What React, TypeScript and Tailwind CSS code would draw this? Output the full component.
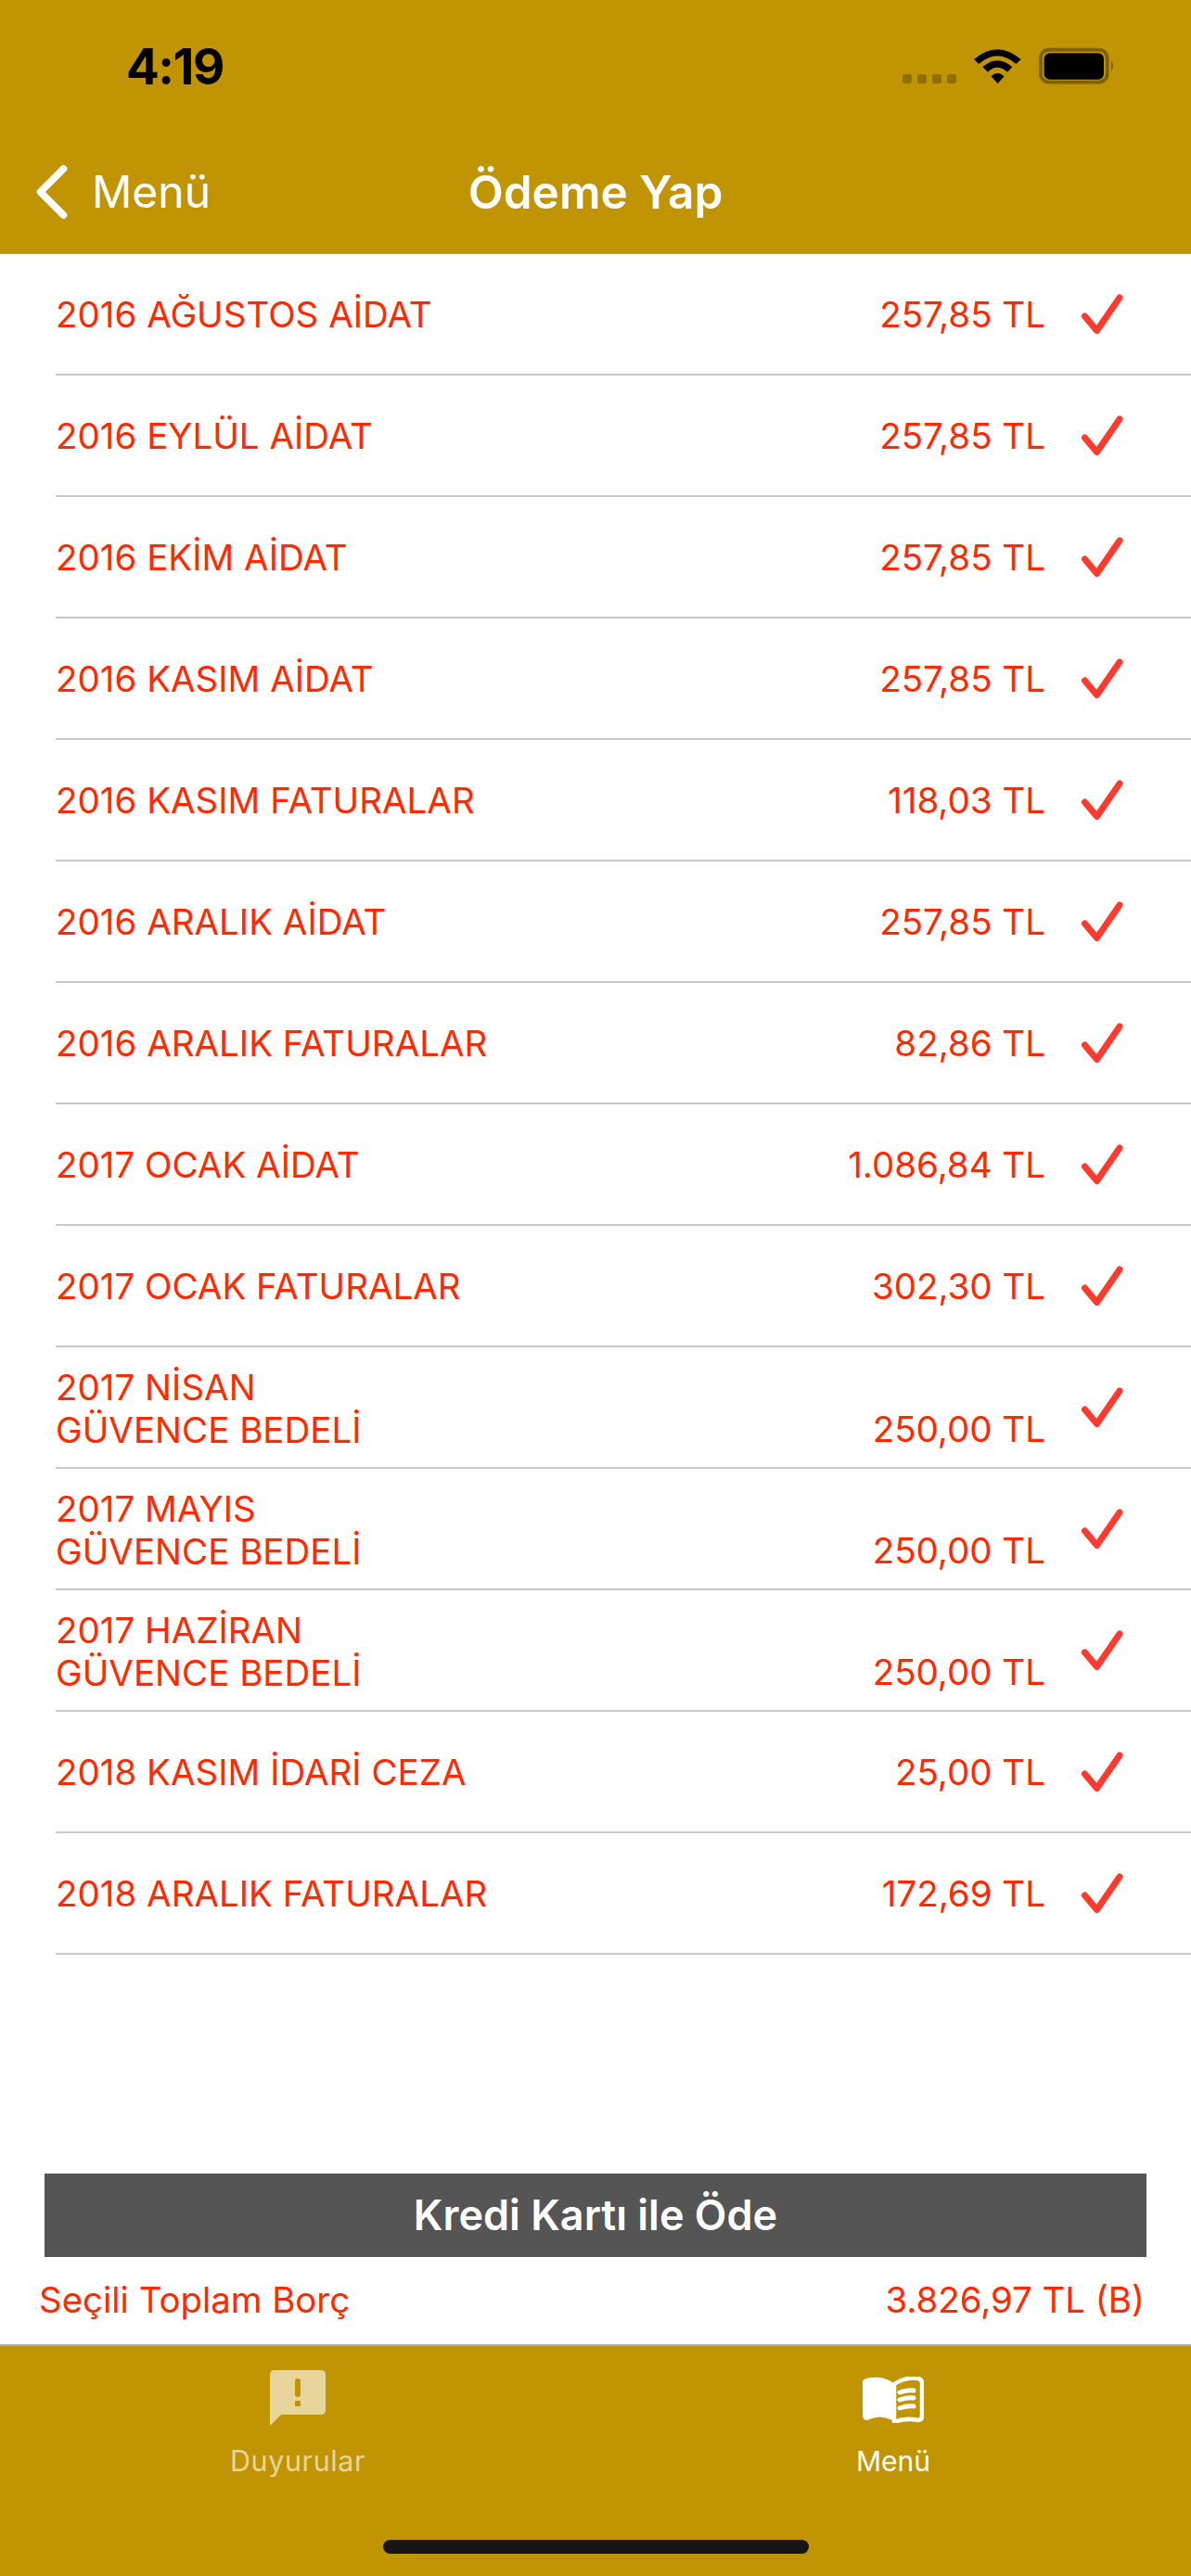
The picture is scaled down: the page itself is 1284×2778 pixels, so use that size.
import React from "react";

const rows: { label: string; price: string; two?: boolean }[] = [
  { label: "2016 AĞUSTOS AİDAT", price: "257,85 TL" },
  { label: "2016 EYLÜL AİDAT", price: "257,85 TL" },
  { label: "2016 EKİM AİDAT", price: "257,85 TL" },
  { label: "2016 KASIM AİDAT", price: "257,85 TL" },
  { label: "2016 KASIM FATURALAR", price: "118,03 TL" },
  { label: "2016 ARALIK AİDAT", price: "257,85 TL" },
  { label: "2016 ARALIK FATURALAR", price: "82,86 TL" },
  { label: "2017 OCAK AİDAT", price: "1.086,84 TL" },
  { label: "2017 OCAK FATURALAR", price: "302,30 TL" },
  { label: "2017 NİSAN\nGÜVENCE BEDELİ", price: "250,00 TL", two: true },
  { label: "2017 MAYIS\nGÜVENCE BEDELİ", price: "250,00 TL", two: true },
  { label: "2017 HAZİRAN\nGÜVENCE BEDELİ", price: "250,00 TL", two: true },
  { label: "2018 KASIM İDARİ CEZA", price: "25,00 TL" },
  { label: "2018 ARALIK FATURALAR", price: "172,69 TL" },
];

function Check() {
  return (
    <svg width="50" height="50" viewBox="0 0 50 50" className="shrink-0">
      <path d="M6.5 27 L19.5 42.5 L44 7" fill="none" stroke="#ff3b30" strokeWidth="7" strokeLinecap="round" strokeLinejoin="round" />
    </svg>
  );
}

function StatusIcons() {
  return (
    <svg width="270" height="70" viewBox="0 0 810 210" className="shrink-0">
      <g fill="#8f6f00">
        <rect x="69" y="123" width="30" height="31" rx="9" />
        <rect x="117" y="123" width="30" height="31" rx="9" />
        <rect x="165" y="123" width="30" height="31" rx="9" />
        <rect x="213" y="123" width="30" height="31" rx="9" />
      </g>
      <g fill="#000">
        <path d="M300 75 Q375 10 452 75 L436 90 Q375 38 316 90 Z" />
        <path d="M328 100 Q375 58 424 100 L408 116 Q375 86 345 116 Z" />
        <path d="M355 130 Q376 108 398 130 L377 153 Z" />
      </g>
      <rect x="516" y="44" width="215" height="105" rx="27" fill="none" stroke="#7d6100" strokeWidth="11" />
      <rect x="527" y="55" width="193" height="85" rx="18" fill="#000" />
      <path d="M744 79 Q756 96 744 114 Z" fill="#7d6100" />
    </svg>
  );
}

function Chevron() {
  return (
    <svg width="34" height="58" viewBox="0 0 34 58" className="shrink-0">
      <path d="M29.5 4 L4.5 29 L29.5 54" fill="none" stroke="#fff" strokeWidth="7.5" strokeLinecap="round" strokeLinejoin="round" />
    </svg>
  );
}

function Bubble() {
  return (
    <svg width="60" height="60" viewBox="0 0 60 60">
      <path d="M5 0 H55 Q60 0 60 5 V43 Q60 48 55 48 H12 L0 60 V5 Q0 0 5 0 Z M27 12 V26 Q27 29 30 29 Q33 29 33 26 V12 Q33 9 30 9 Q27 9 27 12 Z M27 33 V39 H33 V33 Z" fill="#e7d59b" fillRule="evenodd" />
    </svg>
  );
}

function Book() {
  return (
    <svg width="66" height="50" viewBox="0 0 66 50">
      <path d="M0 6 Q0 3 4 2 Q20 -2 32 6 V47 Q18 40 5 47 Q0 47 0 42 Z" fill="#fff" />
      <path d="M34 8 Q46 0 60 2 Q64 3 64 7 L64 42 Q64 47 60 47 Q46 44 34 49 Z" fill="none" stroke="#fff" strokeWidth="4.5" strokeLinejoin="round" />
      <path d="M40 17 Q49 14 55 15 M40 25 Q49 22 55 23 M40 34 Q49 31 55 32" fill="none" stroke="#fff" strokeWidth="5" strokeLinecap="round" />
    </svg>
  );
}

export default function App() {
  return (
    <div className="w-[1284px] h-[2778px] flex flex-col bg-white overflow-hidden font-['Inter',sans-serif]">
      <header className="h-[274px] shrink-0 bg-[#c09402] border-b border-[#9c9c9c] flex flex-col">
        <div className="h-[141px] pt-[39px] pl-[136px] pr-[64px] flex items-start justify-between">
          <span className="text-[53px] leading-[66px] font-bold text-black tracking-[-1.5px]">4:19</span>
          <StatusIcons />
        </div>
        <div className="h-[132px] grid grid-cols-[1fr_auto_1fr] items-center">
          <div className="flex items-center pl-[39px] gap-[26px]">
            <Chevron />
            <span className="text-[48px] leading-[58px] text-white">Menü</span>
          </div>
          <span className="text-[49.5px] leading-[58px] font-semibold text-white">Ödeme Yap</span>
          <div />
        </div>
      </header>

      <main className="flex-1 min-h-0">
        {rows.map((r) => (
          <div key={r.label} className="ml-[60px] h-[131px] border-b-2 border-[#c8c7cc] flex items-center text-[38.5px] leading-[46px] text-[#ff2a00]">
            <div className={r.two ? "flex-1 whitespace-pre-line pt-[3px]" : "flex-1"}>{r.label}</div>
            <div className={r.two ? "self-end pb-[18px]" : ""}>{r.price}</div>
            <div className="ml-[36px] mr-[71px] w-[50px] h-[50px]"><Check /></div>
          </div>
        ))}
      </main>

      <div className="mx-[48px] h-[90px] shrink-0 bg-[#555555] flex items-center justify-center text-[45px] font-semibold text-white">
        Kredi Kartı ile Öde
      </div>
      <div className="h-[94px] shrink-0 pl-[42px] pr-[50px] flex items-center justify-between text-[38.4px] text-[#ff2a00]">
        <span>Seçili Toplam Borç</span>
        <span>3.826,97 TL (B)</span>
      </div>

      <nav className="h-[250px] shrink-0 bg-[#c09402] border-t-2 border-[#b3b3b3] relative grid grid-cols-2">
        <div className="flex flex-col items-center pt-[26px]">
          <Bubble />
          <span className="mt-[20px] text-[30.5px] leading-[36px] tracking-[0.6px] text-[#e7d59b]">Duyurular</span>
        </div>
        <div className="flex flex-col items-center pt-[33px]">
          <Book />
          <span className="mt-[23px] text-[30px] leading-[36px] text-white">Menü</span>
        </div>
        <div className="absolute left-[413px] top-[209px] w-[459px] h-[15px] rounded-full bg-[#161616]" />
      </nav>
    </div>
  );
}
